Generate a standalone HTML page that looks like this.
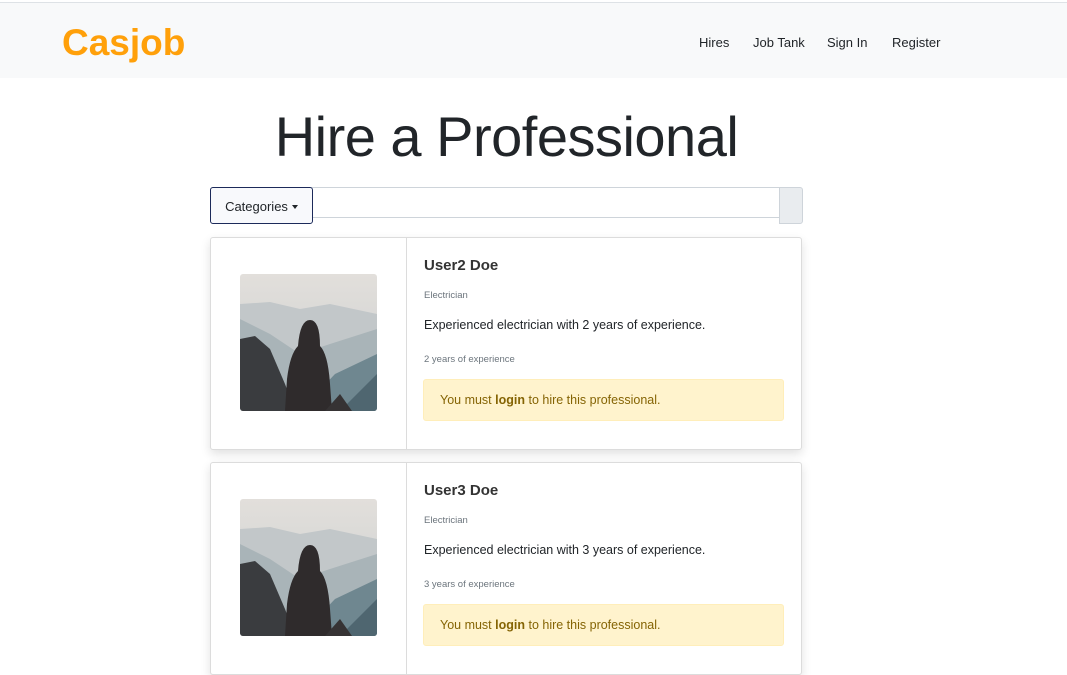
<!DOCTYPE html>
<html><head><meta charset="utf-8"><style>
body{margin:0;background:#fff;font-family:"Liberation Sans",sans-serif;color:#212529;width:1067px;height:644px;overflow:hidden;position:relative}
.nav{position:absolute;left:0;top:2px;width:1067px;height:75px;background:#f8f9fa;border-top:1px solid #dee2e6}
.logo{position:absolute;left:62px;top:19px;font-size:37px;font-weight:bold;color:#ffa00a;letter-spacing:0}
.links a{position:absolute;top:32px;font-size:13px;color:#212529;text-decoration:none}
h1{position:absolute;left:0;width:1013px;text-align:center;top:104px;margin:0;font-weight:400;font-size:56px;letter-spacing:-0.5px}
.ig{position:absolute;left:210px;top:187px;width:590px;height:29px;border:1px solid #ced4da;border-radius:3px}
.cat{position:absolute;left:210px;top:187px;width:101px;height:35px;border:1px solid #1c2a5a;border-radius:3px;background:#f8f9fc;font-size:13px;line-height:37px;text-align:center}
.cat:after{content:"";display:inline-block;margin-left:4px;vertical-align:2px;border-left:3px solid transparent;border-right:3px solid transparent;border-top:4px solid #212529}
.btn{position:absolute;left:779px;top:187px;width:22px;height:35px;background:#e9ecef;border:1px solid #ced4da;border-radius:0 3px 3px 0}
.card{position:absolute;left:210px;width:590px;height:211px;border:1px solid #dcdcdc;border-radius:3px;box-shadow:0 4px 10px rgba(0,0,0,.12);background:#fff}
.card .div{position:absolute;left:195px;top:0;bottom:0;border-left:1px solid #dcdcdc}
.card svg{position:absolute;left:29px;top:36px;border-radius:3px}
.nm{position:absolute;left:213px;top:19px;font-size:15px;font-weight:bold;color:#333}
.sm{position:absolute;left:213px;font-size:9.5px;color:#6c757d}
.ds{position:absolute;left:213px;top:80px;font-size:12.5px}
.al{position:absolute;left:212px;top:141px;width:359px;height:40px;background:#fff3cd;border:1px solid #ffeeba;border-radius:3px;color:#856404;font-size:12.5px;line-height:40px;text-indent:16px}
</style></head><body>
<div class="nav"><div class="logo">Casjob</div>
<div class="links"><a style="left:699px">Hires</a><a style="left:753px">Job Tank</a><a style="left:827px">Sign In</a><a style="left:892px">Register</a></div></div>
<h1>Hire a Professional</h1>
<div class="ig"></div><div class="btn"></div><div class="cat">Categories</div>

<svg width="0" height="0" style="position:absolute"><defs>
<linearGradient id="sky" x1="0" y1="0" x2="0" y2="1"><stop offset="0" stop-color="#e2dfdb"/><stop offset="1" stop-color="#c8cdcf"/></linearGradient>
<g id="img">
<rect width="137" height="137" fill="url(#sky)"/>
<path d="M0 30 L30 28 L60 35 L90 30 L137 40 V137 H0Z" fill="#c2c7c9"/>
<path d="M0 45 L30 60 L60 80 L90 70 L137 55 V137 H0Z" fill="#a9b4b8"/>
<path d="M60 137 L95 100 L137 80 V137Z" fill="#6f8790"/>
<path d="M100 137 L137 100 V137Z" fill="#4f6670"/>
<path d="M0 65 L15 62 L30 75 L45 110 L55 137 H0Z" fill="#3a3c3f"/>
<path d="M58 72 Q60 46 70 46 Q80 46 80 72 Q88 80 90 110 L92 137 H45 L47 105 Q50 80 58 72Z" fill="#2f2b2c"/>
<path d="M85 137 L100 120 L112 137Z" fill="#363334"/>
</g></defs></svg>

<div class="card" style="top:237px"><svg width="137" height="137"><use href="#img"/></svg><div class="div"></div>
<div class="nm">User2 Doe</div><div class="sm" style="top:52px">Electrician</div>
<div class="ds">Experienced electrician with 2 years of experience.</div>
<div class="sm" style="top:116px">2 years of experience</div>
<div class="al">You must <b>login</b> to hire this professional.</div></div>

<div class="card" style="top:462px"><svg width="137" height="137"><use href="#img"/></svg><div class="div"></div>
<div class="nm">User3 Doe</div><div class="sm" style="top:52px">Electrician</div>
<div class="ds">Experienced electrician with 3 years of experience.</div>
<div class="sm" style="top:116px">3 years of experience</div>
<div class="al">You must <b>login</b> to hire this professional.</div></div>
</body></html>
